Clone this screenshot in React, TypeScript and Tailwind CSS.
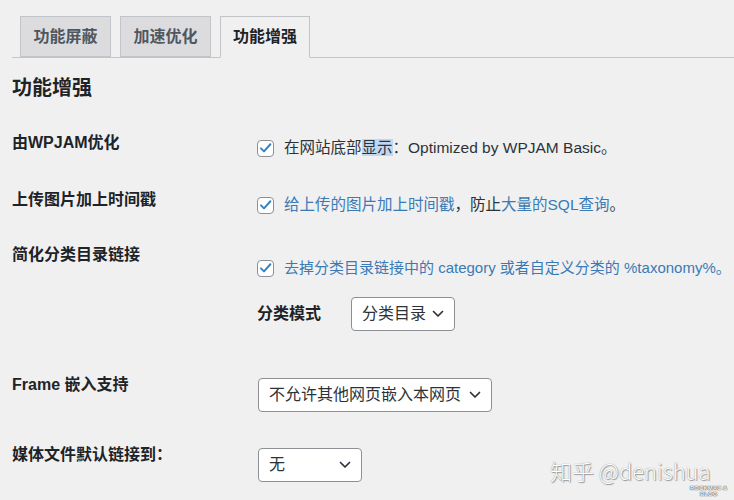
import type { ReactNode } from "react";

const font = { fontFamily: '"Liberation Sans", "Noto Sans CJK SC", sans-serif' };

function Checkbox() {
  return (
    <span className="flex h-[17px] w-[17px] shrink-0 items-center justify-center rounded-[4px] border border-[#8c8f94] bg-white">
      <svg viewBox="0 0 20 20" className="h-[16px] w-[16px]" fill="none">
        <path d="M4 10.5l4 4L16.5 5" stroke="#3582c4" strokeWidth="2.6" strokeLinecap="round" strokeLinejoin="round" />
      </svg>
    </span>
  );
}

function Chevron() {
  return (
    <svg viewBox="0 0 12 8" className="h-[8px] w-[12px] shrink-0" fill="none">
      <path d="M1.5 1.5L6 6l4.5-4.5" stroke="#2c3338" strokeWidth="1.7" strokeLinecap="round" strokeLinejoin="round" />
    </svg>
  );
}

function Select({ value, width }: { value: string; width: string }) {
  return (
    <div className={`flex h-[34px] items-center justify-between rounded-[4px] border border-[#8c8f94] bg-white px-[10px] text-[16px] text-[#2c3338] ${width}`}>
      <span className="whitespace-nowrap">{value}</span>
      <Chevron />
    </div>
  );
}

function Row({ label, labelPad, contentPad, height, children }: { label: string; labelPad: string; contentPad: string; height: string; children: ReactNode }) {
  return (
    <div className={`flex ${height}`}>
      <div className={`w-[245px] shrink-0 text-[16px] font-bold leading-6 text-[#1d2327] ${labelPad}`}>{label}</div>
      <div className={`min-w-0 flex-1 ${contentPad}`}>{children}</div>
    </div>
  );
}

export default function App() {
  const tabs = ["功能屏蔽", "加速优化", "功能增强"];

  return (
    <div className="relative h-[500px] w-[734px] overflow-hidden bg-[#f0f0f1]" style={font}>
      <div className="ml-[12px] flex gap-[9px] border-b border-[#c3c4c7] pl-[8px] pt-[16px]">
        {tabs.map((tab, i) =>
          i === 2 ? (
            <div key={tab} className="-mb-px flex h-[42px] w-[90px] items-center justify-center border border-b-[#f0f0f1] border-[#c3c4c7] bg-[#f0f0f1] text-[16px] font-bold text-[#1d2327]">
              {tab}
            </div>
          ) : (
            <div key={tab} className="-mb-px flex h-[41px] w-[91px] items-center justify-center border border-[#c3c4c7] bg-[#dcdcde] text-[16px] font-bold text-[#50575e]">
              {tab}
            </div>
          )
        )}
      </div>

      <h2 className="ml-[12px] mt-[18px] text-[20px] font-bold leading-6 text-[#1d2327]">功能增强</h2>

      <div className="ml-[12px] mt-[20px]">
        <Row label="由WPJAM优化" height="h-[60px]" labelPad="pt-[11px]" contentPad="pt-[16px]">
          <div className="flex items-center gap-[10px] whitespace-nowrap text-[15.5px] leading-6 text-[#2c3338]">
            <Checkbox />
            <span>
              在网站底部<span className="bg-[#c0d7f2]">显示</span>：Optimized by WPJAM Basic。
            </span>
          </div>
        </Row>

        <Row label="上传图片加上时间戳" height="h-[56px]" labelPad="pt-[8px]" contentPad="pt-[13px]">
          <div className="flex items-center gap-[10px] whitespace-nowrap text-[15.5px] leading-6 text-[#2c3338]">
            <Checkbox />
            <span>
              <span className="text-[#3a7ab5]">给上传的图片加上时间戳</span>，防止<span className="text-[#3a7ab5]">大量的SQL查询</span>。
            </span>
          </div>
        </Row>

        <Row label="简化分类目录链接" height="h-[124px]" labelPad="pt-[7px]" contentPad="pt-[20px]">
          <div className="flex items-center gap-[10px] whitespace-nowrap text-[15px] leading-6 text-[#3a7ab5]">
            <Checkbox />
            <span>去掉分类目录链接中的 category 或者自定义分类的 %taxonomy%。</span>
          </div>
          <div className="mt-[17px] flex items-center">
            <span className="w-[94px] text-[16px] font-bold text-[#1d2327]">分类模式</span>
            <Select value="分类目录" width="w-[104px]" />
          </div>
        </Row>

        <Row label="Frame 嵌入支持" height="h-[70px]" labelPad="pt-[13px]" contentPad="pt-[18px] pl-px">
          <Select value="不允许其他网页嵌入本网页" width="w-[234px]" />
        </Row>

        <Row label="媒体文件默认链接到：" height="h-[70px]" labelPad="pt-[13px]" contentPad="pt-[18px] pl-px">
          <Select value="无" width="w-[104px]" />
        </Row>
      </div>

      <div className="absolute left-[550px] top-[456px] whitespace-nowrap text-[22px] font-light leading-7 text-white [text-shadow:0_0_1px_#7a7a7a,1px_1px_1px_#9a9a9a]" style={{ fontFamily: '"Noto Sans CJK SC", sans-serif' }}>
        知乎 @denishua
      </div>
      <div className="absolute left-[690px] top-[485px] flex flex-col items-center text-[6px] font-bold leading-[6px] text-white [text-shadow:0_0_1px_#333,0_0_1px_#333]">
        <span>ROCKMAC &amp;</span>
        <span>BLOG</span>
      </div>
    </div>
  );
}
